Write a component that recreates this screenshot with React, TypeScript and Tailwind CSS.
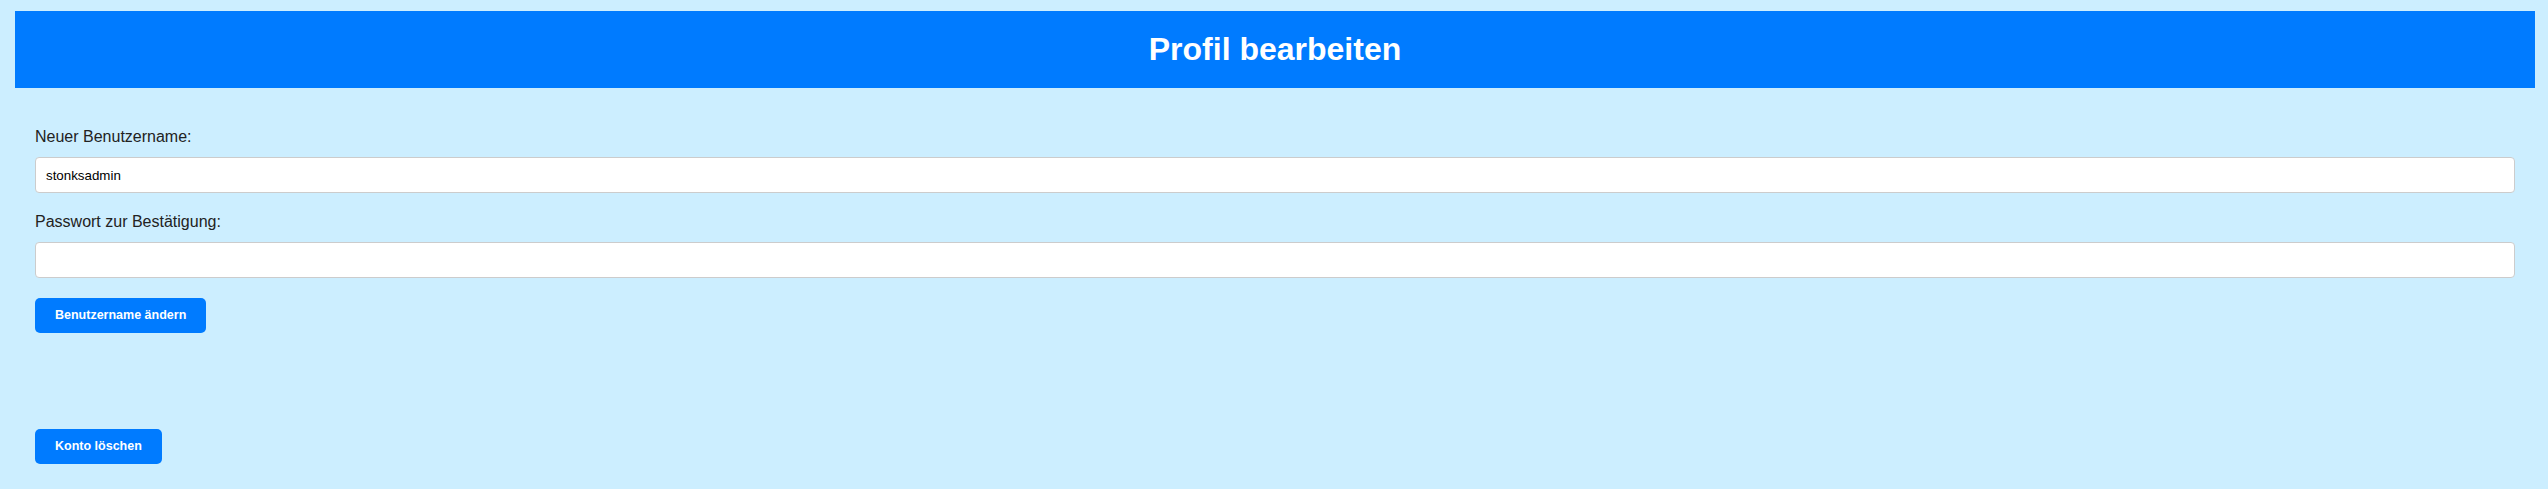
import React from "react";

const ProfilBearbeiten = () => {
  return (
    <div className="min-h-screen bg-[#cceeff] pl-[15px] pr-[13px] pt-[11px] font-['Liberation_Sans',Arial,sans-serif]">

      <header className="h-[77px] bg-[#007bff] flex items-center justify-center">
        <h1 className="text-[32px] leading-[37px] font-bold text-white">Profil bearbeiten</h1>
      </header>

      <main className="px-[20px] pt-[40px] pb-[24px]">

        <form className="flex flex-col">
          <label className="block text-[16px] leading-[18px] text-[#222] mb-[11px]">
            Neuer Benutzername:
          </label>
          <input
            type="text"
            defaultValue="stonksadmin"
            className="w-full h-[36px] px-[10px] bg-white border border-[#cccccc] rounded-[4px] text-[13.33px] text-black outline-none"
          />

          <label className="block text-[16px] leading-[18px] text-[#222] mt-[20px] mb-[11px]">
            Passwort zur Bestätigung:
          </label>
          <input
            type="password"
            className="w-full h-[36px] px-[10px] bg-white border border-[#cccccc] rounded-[4px] text-[13.33px] text-black outline-none"
          />

          <div className="mt-[20px]">
            <button
              type="button"
              className="bg-[#007bff] text-white text-[12.5px] font-bold leading-[15px] px-[20px] py-[10px] rounded-[5px]"
            >
              Benutzername ändern
            </button>
          </div>
        </form>

        <div className="mt-[96px]">
          <button
            type="button"
            className="bg-[#007bff] text-white text-[12.5px] font-bold leading-[15px] px-[20px] py-[10px] rounded-[5px]"
          >
            Konto löschen
          </button>
        </div>

      </main>
    </div>
  );
};

export default ProfilBearbeiten;
